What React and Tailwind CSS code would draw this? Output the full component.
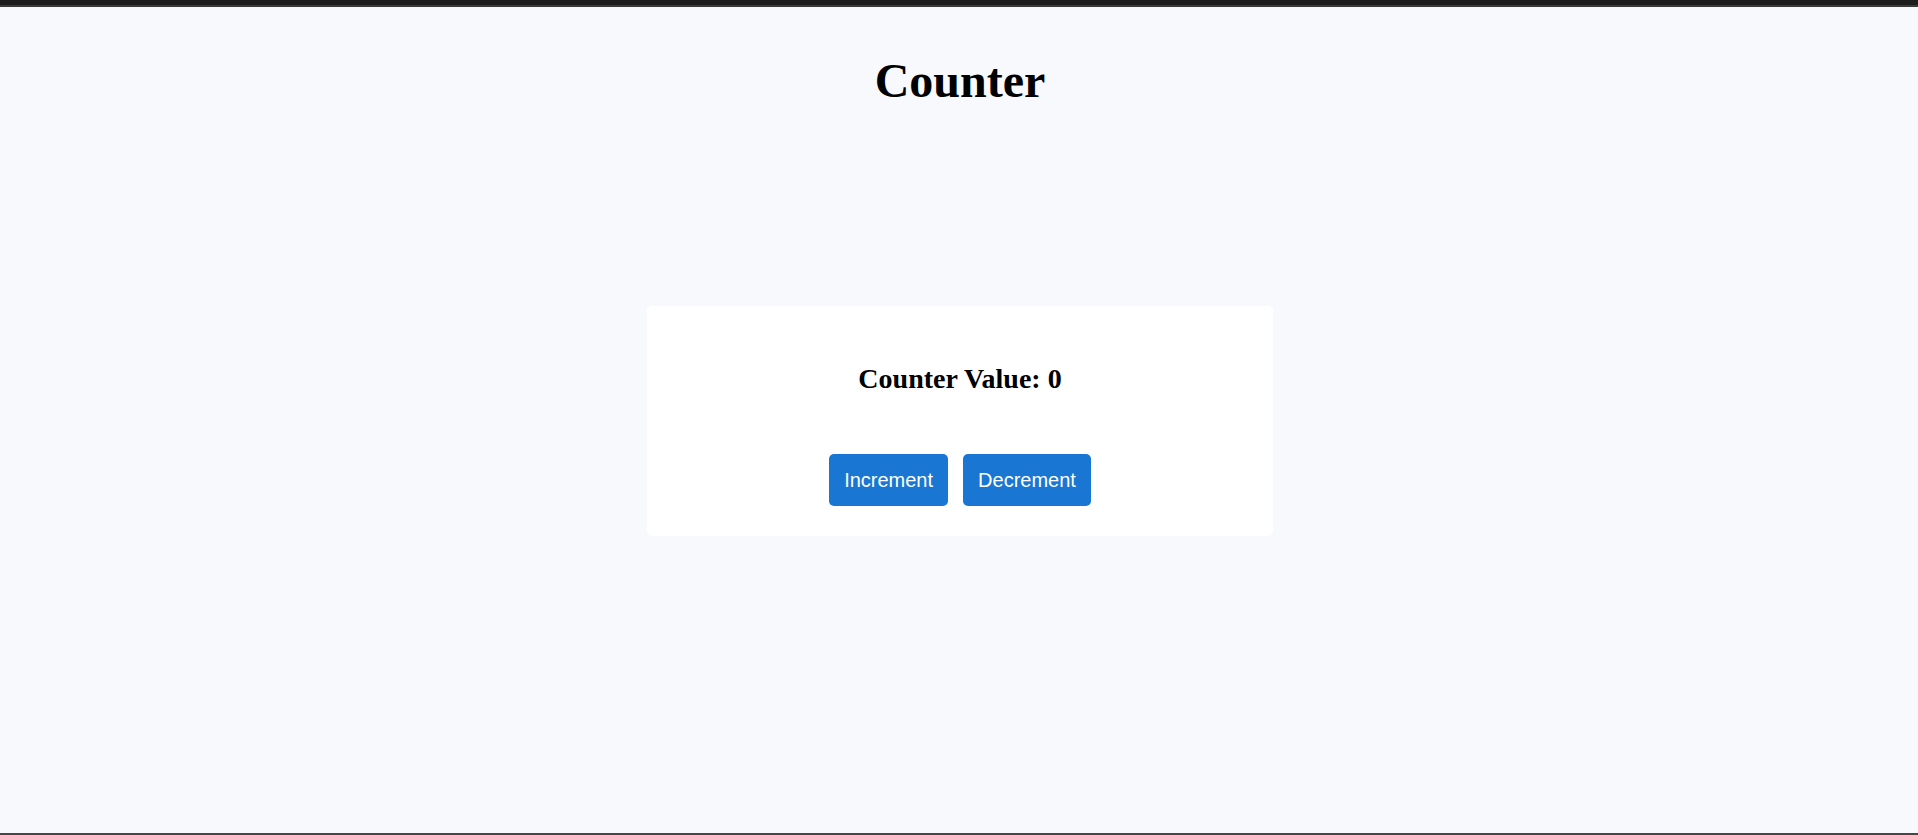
import React, { useState } from 'react';

export default function App() {
  const [count, setCount] = useState(0);

  return (
    <div className="h-[835px] w-full flex flex-col bg-[#f7f9fc] overflow-hidden" style={{ fontFamily: '"Liberation Serif", serif' }}>
      {/* browser chrome edge */}
      <div className="h-[5px] bg-[#1d1d1d] shrink-0" />
      <div className="h-[2px] bg-[#3a3a3a] shrink-0" />

      <div className="flex-1 flex flex-col items-center pl-[2px]">
        <h1 className="mt-[47px] text-[48px] font-bold leading-[53px] text-black">Counter</h1>

        <div className="mt-[199px] w-[626px] h-[230px] bg-white rounded-[5px] flex flex-col items-center pt-[57px]">
          <h3 className="text-[28px] font-bold leading-[31px] text-black">Counter Value: {count}</h3>
          <div className="mt-[60px] flex gap-[15px]">
            <button
              onClick={() => setCount(count + 1)}
              className="h-[52px] px-[15px] rounded-[5px] bg-[#1976d2] text-white text-[20px]"
              style={{ fontFamily: '"Liberation Sans", Arial, sans-serif' }}
            >
              Increment
            </button>
            <button
              onClick={() => setCount(count - 1)}
              className="h-[52px] px-[15px] rounded-[5px] bg-[#1976d2] text-white text-[20px]"
              style={{ fontFamily: '"Liberation Sans", Arial, sans-serif' }}
            >
              Decrement
            </button>
          </div>
        </div>
      </div>

      <div className="h-[2px] bg-[#474747] shrink-0" />
    </div>
  );
}
